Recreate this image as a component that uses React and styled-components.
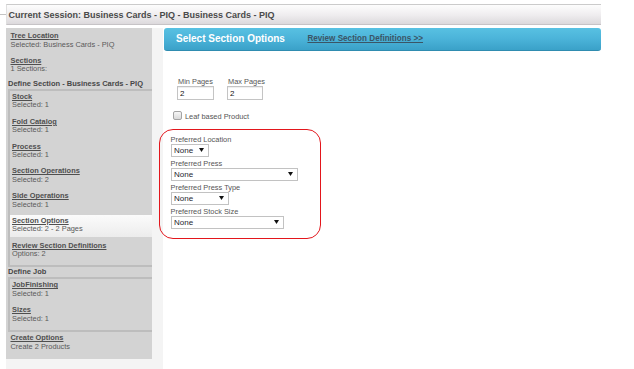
import React from 'react';
import styled, { createGlobalStyle } from 'styled-components';

const Global = createGlobalStyle`
  html, body { margin: 0; padding: 0; background: #fff; }
  body { font-family: "Liberation Sans", Arial, Helvetica, sans-serif; }
  * { box-sizing: border-box; }
`;

const Page = styled.div`
  width: 634px;
  height: 369px;
  overflow: hidden;
  padding-top: 4px;
`;

const SessionHeader = styled.div`
  position: relative;
  margin-left: 6px;
  width: 595px;
  height: 21px;
  border-top: 1px solid #cbcbcb;
  border-bottom: 1px solid #c6c3c6;
  border-left: 1px solid #e0e0e0;
  background: linear-gradient(#fdfdfd, #eeecee 55%, #dcd9dc);
  display: flex;
  align-items: center;
  padding-left: 1.5px;
  font-size: 9px;
  font-weight: bold;
  color: #4a4a4a;
  white-space: nowrap;
  &::before {
    content: '';
    position: absolute;
    left: -7px;
    top: 9px;
    width: 6px;
    height: 1px;
    background: #c4c4c4;
  }
`;

const Body = styled.div`
  display: flex;
  margin-top: 3px;
  height: 341px;
`;

const LeftColumn = styled.div`
  margin-left: 6px;
  width: 157px;
  background: #f4f4f4;
`;

const Sidebar = styled.div`
  width: 146px;
  background: #d3d3d3;
  padding: 4.35px 0 7.85px 2px;
  font-size: 7.4px;
  line-height: 8.3px;
  color: #555;
  overflow: hidden;
  white-space: nowrap;
`;

const NavBlock = styled.div`
  padding-left: 2.5px;
  margin-top: ${(p) => p.$mt || 0}px;
`;

const NavTitle = styled.a`
  display: block;
  font-weight: bold;
  color: #4f4f4f;
  text-decoration: underline;
  cursor: pointer;
`;

const NavSub = styled.div`
  color: #5a5a5a;
`;

const SectionHeading = styled.div`
  font-weight: bold;
  font-size: 7.5px;
  color: #474747;
  margin-top: ${(p) => p.$mt}px;
`;

const GroupBox = styled.div`
  margin-top: ${(p) => p.$mt}px;
  border: 2px solid #bdbdbd;
  border-right: none;
  padding: 0 0 ${(p) => p.$pb}px 0;
  display: flex;
  flex-direction: column;
  gap: 3.2px;
`;

const GroupItem = styled.div`
  padding: 2px 0 3px 2px;
  background: ${(p) => (p.$active ? 'linear-gradient(#fbfbfb, #ececec)' : 'transparent')};
`;

const Main = styled.div`
  width: 437px;
  margin-left: 1px;
  background: #fff;
`;

const TitleBar = styled.div`
  height: 23px;
  border-radius: 3px;
  border-bottom: 1px solid #2f8cb0;
  background: linear-gradient(#58c1e2, #4bb3d9 50%, #3aa1c8);
  display: flex;
  align-items: center;
  gap: 22.5px;
  padding-left: 12px;
  padding-bottom: 1px;
  white-space: nowrap;
`;

const BarTitle = styled.span`
  color: #fff;
  font-weight: bold;
  font-size: 10px;
`;

const BarLink = styled.a`
  color: #3b5566;
  font-weight: bold;
  font-size: 8.15px;
  text-decoration: underline;
  cursor: pointer;
`;

const FormArea = styled.div`
  padding: 26.5px 0 0 7px;
`;

const FieldsRow = styled.div`
  display: flex;
  gap: 13px;
  margin-left: 6px;
`;

const Field = styled.div`
  display: flex;
  flex-direction: column;
`;

const SmallLabel = styled.div`
  font-size: 7.4px;
  line-height: ${(p) => p.$lh || 9}px;
  height: ${(p) => p.$lh || 9}px;
  color: #555;
  padding-left: ${(p) => p.$pl || 0}px;
  white-space: nowrap;
`;

const PageInput = styled.input`
  width: ${(p) => p.$w}px;
  height: 14px;
  border: 1px solid #c4c4c4;
  box-shadow: inset 0 1px 1px rgba(0, 0, 0, 0.07);
  font-family: inherit;
  font-size: 8px;
  color: #111;
  padding: 0 2px;
  margin: 0;
  outline: none;
`;

const CheckRow = styled.div`
  display: flex;
  align-items: center;
  gap: 3px;
  margin: 10px 0 0 2px;
  height: 10px;
`;

const CheckBox = styled.span`
  display: block;
  width: 9px;
  height: 9px;
  border: 1px solid #a3a3a3;
  border-radius: 2px;
  background: linear-gradient(#f6f6f6, #d9d9d9);
`;

const CheckText = styled.span`
  font-size: 7.4px;
  color: #555;
  margin-top: 2px;
  white-space: nowrap;
`;

const Highlight = styled.div`
  margin: 8.5px 0 0 -12.5px;
  width: 162px;
  border: 1.5px solid #e3161c;
  border-radius: 14px;
  padding: 5px 0 9.5px 11px;
  display: flex;
  flex-direction: column;
  gap: 2px;
`;

const SelectGroup = styled.div`
  display: flex;
  flex-direction: column;
`;

const Dropdown = styled.div`
  width: ${(p) => p.$w}px;
  height: 13px;
  border: 1px solid #c2c2c2;
  background: #fff;
  display: flex;
  align-items: center;
  justify-content: space-between;
  padding: 0 4px 0 2.5px;
  font-size: 8px;
  color: #1e1e30;
`;

const Arrow = styled.svg`
  width: 5px;
  height: 4px;
  flex: none;
`;

const sidebarTop = [
  { title: 'Tree Location', sub: 'Selected: Business Cards - PIQ' },
  { title: 'Sections', sub: '1 Sections:' },
];

const sectionItems = [
  { title: 'Stock', sub: 'Selected: 1' },
  { title: 'Fold Catalog', sub: 'Selected: 1' },
  { title: 'Process', sub: 'Selected: 1' },
  { title: 'Section Operations', sub: 'Selected: 2' },
  { title: 'Side Operations', sub: 'Selected: 1' },
  { title: 'Section Options', sub: 'Selected: 2 - 2 Pages', active: true },
  { title: 'Review Section Definitions', sub: 'Options: 2' },
];

const jobItems = [
  { title: 'JobFinishing', sub: 'Selected: 1' },
  { title: 'Sizes', sub: 'Selected: 1' },
];

const selects = [
  { label: 'Preferred Location', w: 38 },
  { label: 'Preferred Press', w: 127 },
  { label: 'Preferred Press Type', w: 58 },
  { label: 'Preferred Stock Size', w: 113 },
];

function Select({ w }) {
  return (
    <Dropdown $w={w} role="combobox">
      <span>None</span>
      <Arrow viewBox="0 0 5 4">
        <polygon points="0,0 5,0 2.5,4" fill="#111" />
      </Arrow>
    </Dropdown>
  );
}

function Item({ item }) {
  return (
    <GroupItem $active={item.active}>
      <NavTitle>{item.title}</NavTitle>
      <NavSub>{item.sub}</NavSub>
    </GroupItem>
  );
}

export default function App() {
  return (
    <Page>
      <Global />
      <SessionHeader>Current Session: Business Cards - PIQ - Business Cards - PIQ</SessionHeader>
      <Body>
        <LeftColumn>
          <Sidebar>
            {sidebarTop.map((b, i) => (
              <NavBlock key={b.title} $mt={i ? 7.7 : 0}>
                <NavTitle>{b.title}</NavTitle>
                <NavSub>{b.sub}</NavSub>
              </NavBlock>
            ))}
            <SectionHeading $mt={6.6}>Define Section - Business Cards - PIQ</SectionHeading>
            <GroupBox $mt={1} $pb={3.5}>
              {sectionItems.map((it) => (
                <Item key={it.title} item={it} />
              ))}
            </GroupBox>
            <SectionHeading $mt={1.1}>Define Job</SectionHeading>
            <GroupBox $mt={1.2} $pb={4.6}>
              {jobItems.map((it) => (
                <Item key={it.title} item={it} />
              ))}
            </GroupBox>
            <NavBlock $mt={1.9}>
              <NavTitle>Create Options</NavTitle>
              <NavSub>Create 2 Products</NavSub>
            </NavBlock>
          </Sidebar>
        </LeftColumn>
        <Main>
          <TitleBar>
            <BarTitle>Select Section Options</BarTitle>
            <BarLink>Review Section Definitions &gt;&gt;</BarLink>
          </TitleBar>
          <FormArea>
            <FieldsRow>
              <Field>
                <SmallLabel $lh={8.5} $pl={1}>Min Pages</SmallLabel>
                <PageInput $w={37} defaultValue="2" />
              </Field>
              <Field>
                <SmallLabel $lh={8.5} $pl={1}>Max Pages</SmallLabel>
                <PageInput $w={36} defaultValue="2" />
              </Field>
            </FieldsRow>
            <CheckRow>
              <CheckBox role="checkbox" aria-checked="false" />
              <CheckText>Leaf based Product</CheckText>
            </CheckRow>
            <Highlight>
              {selects.map((s) => (
                <SelectGroup key={s.label}>
                  <SmallLabel>{s.label}</SmallLabel>
                  <Select w={s.w} />
                </SelectGroup>
              ))}
            </Highlight>
          </FormArea>
        </Main>
      </Body>
    </Page>
  );
}
